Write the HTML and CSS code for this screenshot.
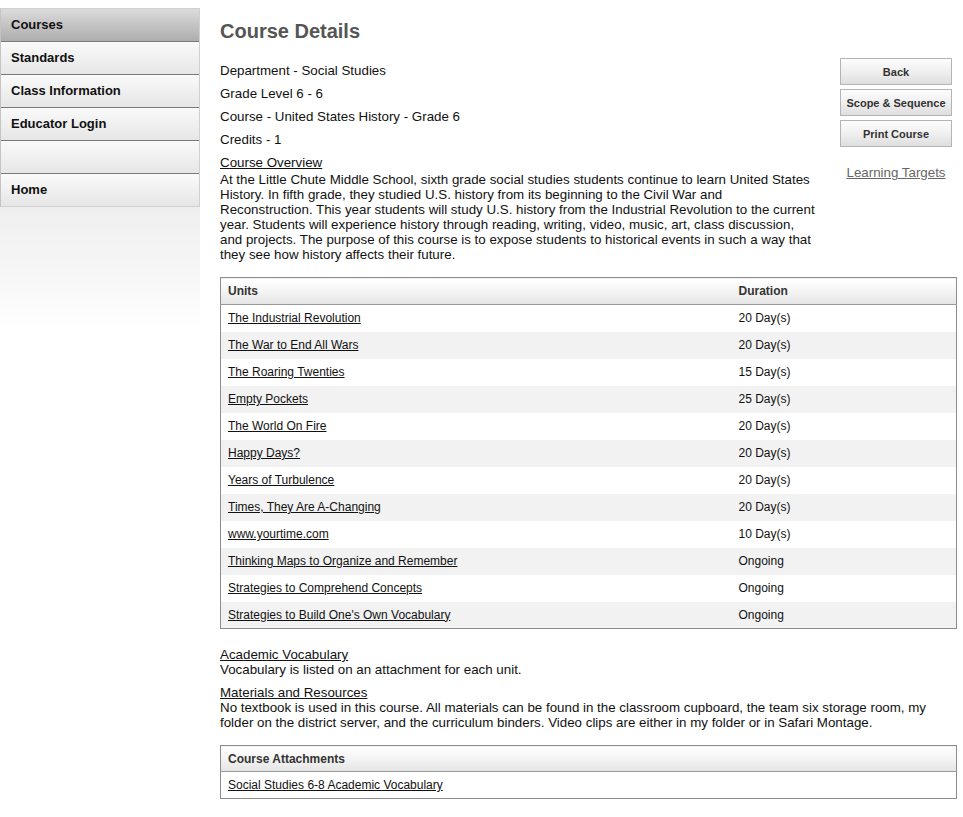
FILE: index.html
```html
<!DOCTYPE html>
<html lang="en">
<head>
<meta charset="utf-8">
<title>Course Details</title>
<link rel="stylesheet" href="styles.css">
</head>
<body>
<div class="page">
  <aside class="sidebar">
    <nav class="nav">
      <a class="nav-item active" href="#">Courses</a>
      <a class="nav-item" href="#">Standards</a>
      <a class="nav-item" href="#">Class Information</a>
      <a class="nav-item" href="#">Educator Login</a>
      <span class="nav-item"></span>
      <a class="nav-item last" href="#">Home</a>
    </nav>
    <div class="nav-fade"></div>
  </aside>

  <main class="main">
    <h1 class="title">Course Details</h1>

    <div class="top">
      <div class="info">
        <p class="line">Department - Social Studies</p>
        <p class="line">Grade Level 6 - 6</p>
        <p class="line">Course - United States History - Grade 6</p>
        <p class="line">Credits - 1</p>
        <a class="label" href="#">Course Overview</a>
        <p class="text">At the Little Chute Middle School, sixth grade social studies students continue to learn United States<br>History. In fifth grade, they studied U.S. history from its beginning to the Civil War and<br>Reconstruction. This year students will study U.S. history from the Industrial Revolution to the current<br>year. Students will experience history through reading, writing, video, music, art, class discussion,<br>and projects. The purpose of this course is to expose students to historical events in such a way that<br>they see how history affects their future.</p>
      </div>
      <div class="actions">
        <button class="btn" type="button">Back</button>
        <button class="btn" type="button">Scope &amp; Sequence</button>
        <button class="btn" type="button">Print Course</button>
        <a class="targets" href="#">Learning Targets</a>
      </div>
    </div>

    <table class="grid units">
      <colgroup><col class="col-unit"><col></colgroup>
      <thead>
        <tr><th>Units</th><th>Duration</th></tr>
      </thead>
      <tbody>
        <tr><td><a href="#">The Industrial Revolution</a></td><td>20 Day(s)</td></tr>
        <tr><td><a href="#">The War to End All Wars</a></td><td>20 Day(s)</td></tr>
        <tr><td><a href="#">The Roaring Twenties</a></td><td>15 Day(s)</td></tr>
        <tr><td><a href="#">Empty Pockets</a></td><td>25 Day(s)</td></tr>
        <tr><td><a href="#">The World On Fire</a></td><td>20 Day(s)</td></tr>
        <tr><td><a href="#">Happy Days?</a></td><td>20 Day(s)</td></tr>
        <tr><td><a href="#">Years of Turbulence</a></td><td>20 Day(s)</td></tr>
        <tr><td><a href="#">Times, They Are A-Changing</a></td><td>20 Day(s)</td></tr>
        <tr><td><a href="#">www.yourtime.com</a></td><td>10 Day(s)</td></tr>
        <tr><td><a href="#">Thinking Maps to Organize and Remember</a></td><td>Ongoing</td></tr>
        <tr><td><a href="#">Strategies to Comprehend Concepts</a></td><td>Ongoing</td></tr>
        <tr><td><a href="#">Strategies to Build One's Own Vocabulary</a></td><td>Ongoing</td></tr>
      </tbody>
    </table>

    <section class="section first">
      <a class="label" href="#">Academic Vocabulary</a>
      <p class="text">Vocabulary is listed on an attachment for each unit.</p>
    </section>
    <section class="section">
      <a class="label" href="#">Materials and Resources</a>
      <p class="text">No textbook is used in this course. All materials can be found in the classroom cupboard, the team six storage room, my folder on the district server, and the curriculum binders. Video clips are either in my folder or in Safari Montage.</p>
    </section>

    <table class="grid attachments">
      <thead>
        <tr><th>Course Attachments</th></tr>
      </thead>
      <tbody>
        <tr><td><a href="#">Social Studies 6-8 Academic Vocabulary</a></td></tr>
      </tbody>
    </table>
  </main>
</div>
</body>
</html>
```

FILE: styles.css
```css
* { box-sizing: border-box; }

body {
  margin: 0;
  font-family: "Liberation Sans", Arial, Helvetica, sans-serif;
  font-size: 13.33px;
  color: #111;
  background: #fff;
}

a { color: #111; }

.page {
  display: flex;
  align-items: flex-start;
  padding-top: 8px;
}

/* Sidebar */
.sidebar {
  width: 200px;
  flex: none;
}

.nav {
  display: flex;
  flex-direction: column;
  border-top: 1px solid #d0d0d0;
  border-left: 1px solid #c4c4c4;
  border-right: 1px solid #d0d0d0;
}

.nav-item {
  display: block;
  height: 33px;
  padding-left: 10px;
  line-height: 32px;
  border-bottom: 1px solid #7a7a7a;
  background: linear-gradient(to bottom, #fafafa 0%, #f0f0f0 50%, #e6e6e6 100%);
  font-size: 13px;
  font-weight: bold;
  color: #111;
  text-decoration: none;
}

.nav-item.active {
  background: linear-gradient(to bottom, #dcdcdc 0%, #c4c4c4 50%, #adadad 100%);
}

.nav-item.last {
  border-bottom-color: #d0d0d0;
}

.nav-fade {
  height: 125px;
  background: linear-gradient(to bottom, #efefef 0%, #f6f6f6 50%, #ffffff 100%);
}

/* Main */
.main {
  margin-left: 20px;
  width: 737px;
  flex: none;
}

.title {
  margin: 11px 0 0;
  font-size: 20px;
  line-height: 24px;
  font-weight: bold;
  color: #555;
}

.top {
  display: flex;
  justify-content: space-between;
  margin-top: 15px;
}

.info {
  width: 610px;
  padding-top: 5px;
}

.line {
  margin: 0 0 8px;
  line-height: 15px;
}

.label {
  display: block;
  width: max-content;
  line-height: 15px;
}

.info .label { margin-bottom: 2px; }

.text {
  margin: 0;
  line-height: 15px;
}

.actions {
  width: 112px;
  margin-right: 5px;
  display: flex;
  flex-direction: column;
  align-items: center;
  gap: 5px;
}

.btn {
  width: 112px;
  height: 27px;
  border: 1px solid #b4b4b4;
  background: linear-gradient(to bottom, #fdfdfd 0%, #eeeeee 55%, #dedede 100%);
  font-family: inherit;
  font-size: 11px;
  font-weight: bold;
  color: #333;
  padding: 0;
}

.btn + .btn { margin-top: -1px; }

.targets {
  margin-top: 13px;
  color: #666;
  line-height: 15px;
}

/* Tables */
.grid {
  width: 100%;
  border-collapse: collapse;
  table-layout: fixed;
  border: 1px solid #8c8c8c;
  font-size: 12px;
}

.units { margin-top: 15px; }

.col-unit { width: 511px; }

.grid th {
  height: 26px;
  padding: 0 7px;
  text-align: left;
  font-weight: bold;
  color: #333;
  background: linear-gradient(to bottom, #ffffff 0%, #f4f4f4 50%, #e4e4e4 100%);
  border-bottom: 1px solid #9a9a9a;
}

.units th { height: 27px; }

.grid td {
  height: 27px;
  padding: 0 7px;
}

.grid tbody tr:nth-child(even) td {
  background: #f2f2f2;
}

.section.first { margin-top: 18px; }
.section { margin-top: 8px; }

.attachments { margin-top: 15px; }
```
